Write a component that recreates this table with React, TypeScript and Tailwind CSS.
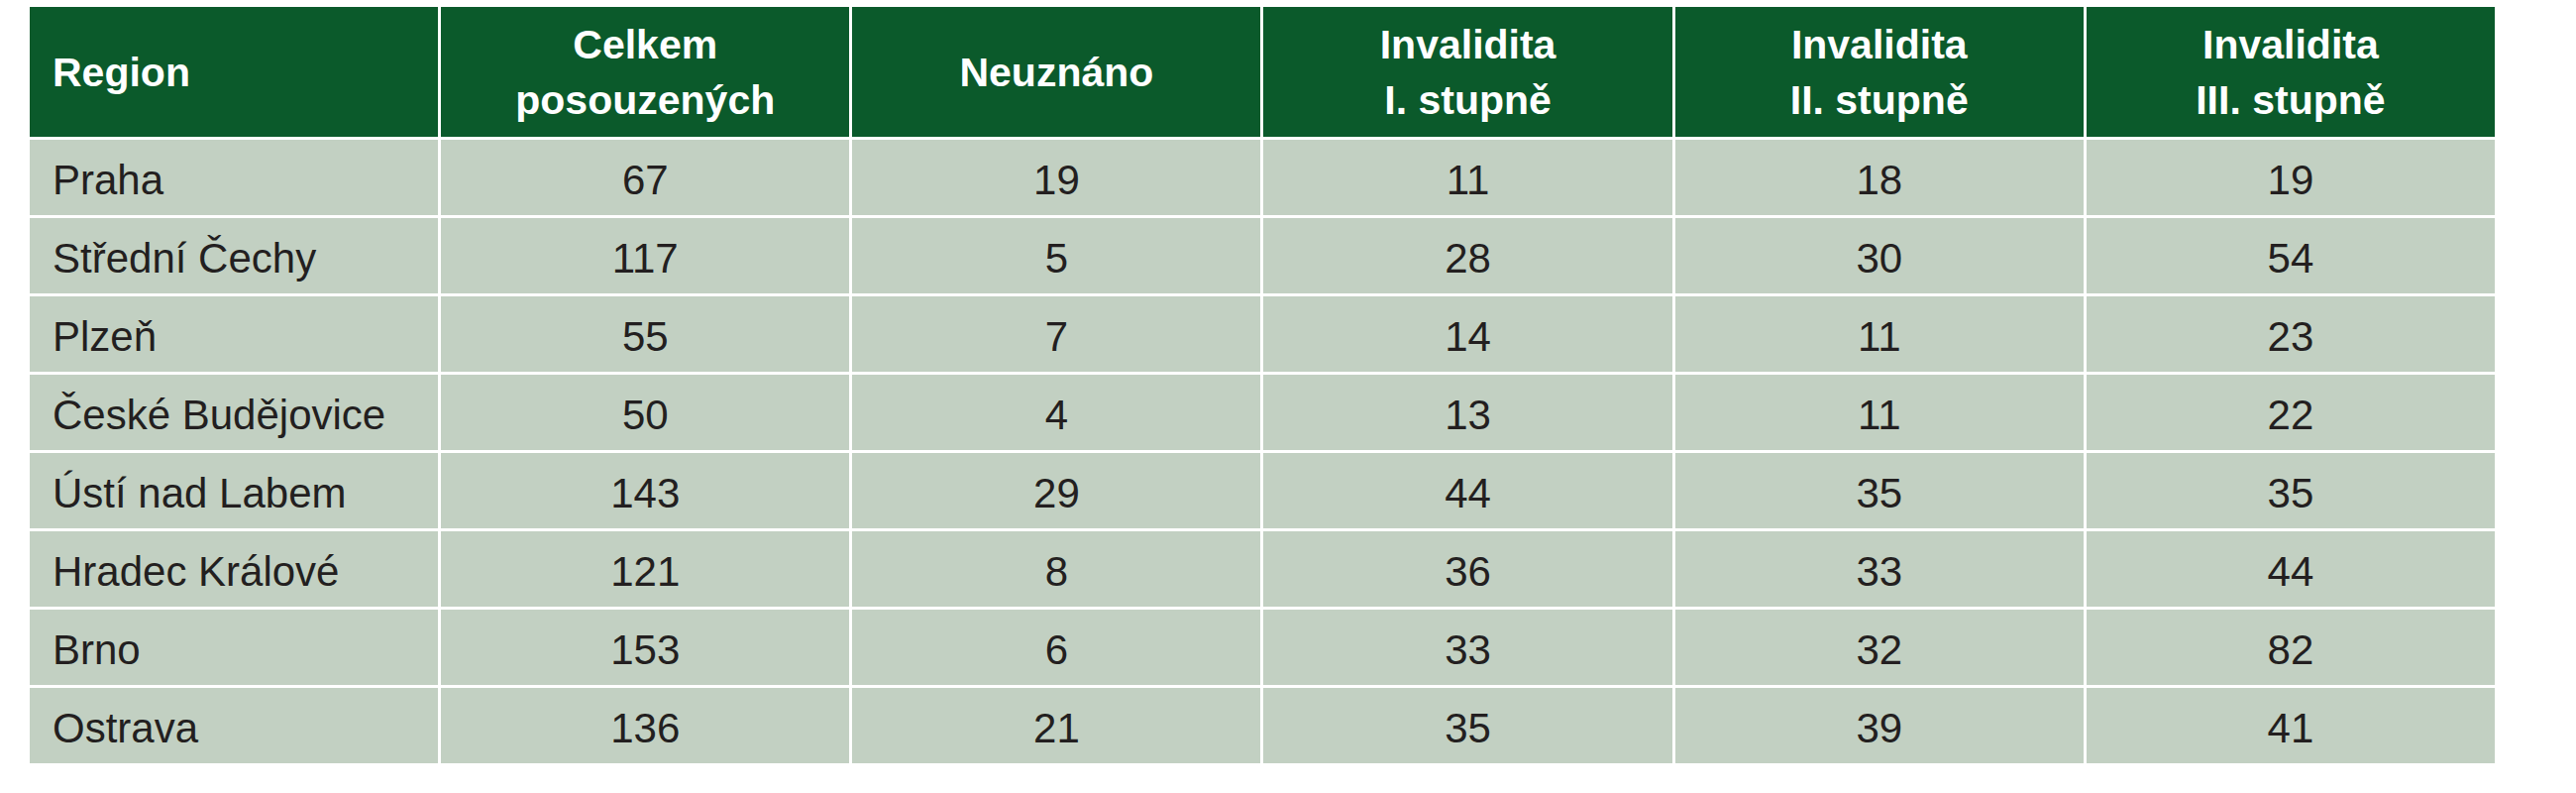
const headers = [
  ['Region'],
  ['Celkem', 'posouzených'],
  ['Neuznáno'],
  ['Invalidita', 'I. stupně'],
  ['Invalidita', 'II. stupně'],
  ['Invalidita', 'III. stupně'],
];

const rows: [string, number, number, number, number, number][] = [
  ['Praha', 67, 19, 11, 18, 19],
  ['Střední Čechy', 117, 5, 28, 30, 54],
  ['Plzeň', 55, 7, 14, 11, 23],
  ['České Budějovice', 50, 4, 13, 11, 22],
  ['Ústí nad Labem', 143, 29, 44, 35, 35],
  ['Hradec Králové', 121, 8, 36, 33, 44],
  ['Brno', 153, 6, 33, 32, 82],
  ['Ostrava', 136, 21, 35, 39, 41],
];

const App = () => {
  return (
    <div className="min-h-screen bg-white pt-[7px] pl-[30px] font-['Liberation_Sans',Arial,sans-serif]">
      <div className="grid w-[2488px] grid-cols-6 gap-[3px] bg-white">
        {/* Header */}
        {headers.map((lines, i) => (
          <div
            key={i}
            className={`flex h-[131px] flex-col justify-center bg-[#0b5a2b] text-[41px] font-bold leading-[56px] text-white ${
              i === 0 ? 'items-start pl-[23px]' : 'items-center'
            }`}
          >
            {lines.map((line) => (
              <span key={line}>{line}</span>
            ))}
          </div>
        ))}

        {/* Body */}
        {rows.map((row) =>
          row.map((cell, j) => (
            <div
              key={`${row[0]}-${j}`}
              className={`flex h-[76px] items-center bg-[#c2d0c2] pt-[6px] text-[42px] leading-none text-[#231f20] ${
                j === 0 ? 'justify-start pl-[23px]' : 'justify-center'
              }`}
            >
              {cell}
            </div>
          ))
        )}
      </div>
    </div>
  );
};

export default App;
